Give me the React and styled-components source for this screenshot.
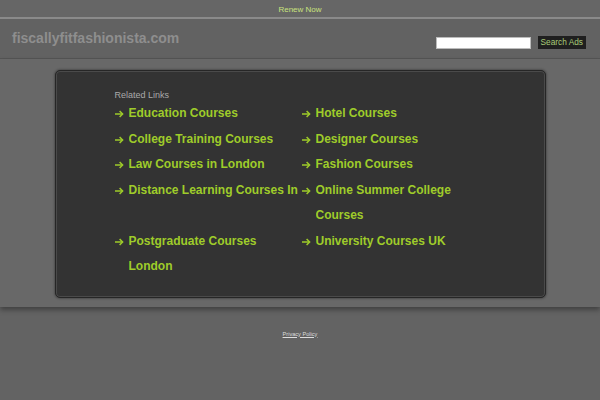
import React from 'react';
import styled, { createGlobalStyle } from 'styled-components';

const GlobalStyle = createGlobalStyle`
  html, body { margin: 0; padding: 0; background: #636363; }
  body { font-family: "Liberation Sans", Arial, sans-serif; }
`;

const TopBar = styled.div` height: 17px; background: #666; border-bottom: 2px solid #8a8a8a; display: flex; align-items: center; justify-content: center;`;
const RenewLink = styled.a` font-size: 8px; color: #c8e27e; text-decoration: none; line-height: 17px; margin-top: 1px;`;
const Header = styled.div` height: 39px; background: #626262; border-bottom: 1px solid #555; display: flex; align-items: center; justify-content: space-between; padding: 0 14px 0 12px;`;
const SiteTitle = styled.div` font-size: 14px; font-weight: bold; color: #8e8e8e; margin-top: -2px;`;
const SearchForm = styled.form` display: flex; align-items: center; gap: 7px; margin-top: 8px;`;
const SearchInput = styled.input` width: 93px; height: 10px; border: 1px solid #bbb; background: #fff; padding: 0; margin: 0;`;
const SearchButton = styled.button` height: 13px; padding: 0 3px; border: none; background: #1f1f1f; color: #a9cc78; font-family: "Liberation Sans", Arial, sans-serif; font-size: 8.3px; line-height: 13px; cursor: pointer;`;
const Main = styled.div` position: relative; z-index: 1; background: #686868; padding: 11px 0 9px; box-shadow: 0 3px 5px rgba(0,0,0,0.35); display: flex; justify-content: center;`;
const Panel = styled.div` width: 430px; padding: 18px 0 17px 59px; background: #333; border: 1px solid #262626; border-radius: 5px; box-shadow: inset 0 0 0 1px #4a4a4a, 0 0 2px 1px rgba(0,0,0,0.25);`;
const PanelTitle = styled.div` font-size: 9px; line-height: 12px; color: #aaa;`;
const LinkGrid = styled.ul` list-style: none; margin: 0; padding: 0; display: grid; grid-template-columns: 187px 187px;`;
const LinkItem = styled.li` display: flex; align-items: flex-start; font-size: 12px; font-weight: bold; line-height: 25.5px; color: #9fcc2a;`;
const ArrowIcon = styled.svg` flex: 0 0 auto; width: 9px; height: 8px; margin: 9px 5px 0 0;`;
const LinkText = styled.a` color: inherit; text-decoration: none; white-space: ${p => p.$nowrap ? 'nowrap' : 'normal'}; overflow: hidden;`;
const Footer = styled.div` background: #636363; padding-top: 15px; text-align: center; height: 80px;`;
const PrivacyLink = styled.a` font-size: 5.6px; color: #ddd; text-decoration: underline;`;

const links = [
  { text: 'Education Courses' },
  { text: 'Hotel Courses' },
  { text: 'College Training Courses' },
  { text: 'Designer Courses' },
  { text: 'Law Courses in London' },
  { text: 'Fashion Courses' },
  { text: 'Distance Learning Courses In', nowrap: true },
  { text: 'Online Summer College Courses' },
  { text: 'Postgraduate Courses London' },
  { text: 'University Courses UK' },
];

function Arrow() {
  return (
    <ArrowIcon viewBox="0 0 9 8" fill="none" stroke="currentColor" strokeWidth="1.5">
      <path d="M0 4H7.6" />
      <path d="M4.6 1L7.6 4L4.6 7" />
    </ArrowIcon>
  );
}

export default function App() {
  return (
    <>
      <GlobalStyle />
      <TopBar>
        <RenewLink href="#">Renew Now</RenewLink>
      </TopBar>
      <Header>
        <SiteTitle>fiscallyfitfashionista.com</SiteTitle>
        <SearchForm onSubmit={e => e.preventDefault()}>
          <SearchInput type="text" />
          <SearchButton type="submit">Search Ads</SearchButton>
        </SearchForm>
      </Header>
      <Main>
        <Panel>
          <PanelTitle>Related Links</PanelTitle>
          <LinkGrid>
            {links.map(link => (
              <LinkItem key={link.text}>
                <Arrow />
                <LinkText href="#" $nowrap={link.nowrap}>{link.text}</LinkText>
              </LinkItem>
            ))}
          </LinkGrid>
        </Panel>
      </Main>
      <Footer>
        <PrivacyLink href="#">Privacy Policy</PrivacyLink>
      </Footer>
    </>
  );
}
